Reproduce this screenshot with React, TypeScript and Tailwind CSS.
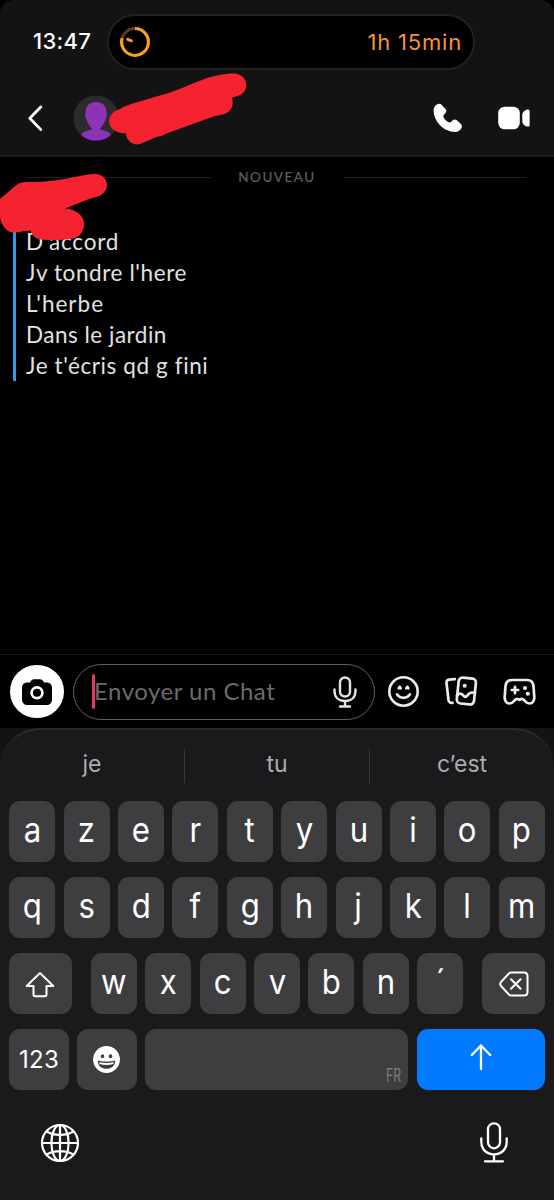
import React from 'react';

const topRow = ['a', 'z', 'e', 'r', 't', 'y', 'u', 'i', 'o', 'p'];
const middleRow = ['q', 's', 'd', 'f', 'g', 'h', 'j', 'k', 'l', 'm'];
const bottomRow = ['w', 'x', 'c', 'v', 'b', 'n', '´'];

const messages = [
  { text: "D'accord", spacing: 'tracking-[0.8px]' },
  { text: "Jv tondre l'here", spacing: 'tracking-[0.6px]' },
  { text: "L'herbe", spacing: 'tracking-[1px]' },
  { text: 'Dans le jardin', spacing: 'tracking-[0.5px]' },
  { text: "Je t'écris qd g fini", spacing: 'tracking-[0.6px]' },
];

const Key: React.FC<{ label: string }> = ({ label }) => (
  <button className="w-[46px] h-[61px] shrink-0 rounded-[11px] bg-[#3e3e40] pb-[2px] flex items-center justify-center text-[33.5px] leading-none text-white">
    <span className="scale-x-[0.93]">{label}</span>
  </button>
);

const StatusBar: React.FC = () => (
  <div className="flex pt-[14px] pl-[33px]">
    <span className="w-[74px] pt-[14px] text-[22px] leading-[27px] font-medium tracking-[0.3px] text-white">13:47</span>
    <div className="w-[368px] h-[55.5px] rounded-full border-2 border-[#212121] bg-black flex items-center justify-between pl-[10px] pr-[11px]">
      <svg width="32" height="32" viewBox="0 0 32 32" fill="none" strokeWidth="3">
        <circle cx="16" cy="16" r="13.4" stroke="#5c3d10" />
        <path d="M16 2.6A13.4 13.4 0 1 1 3.2 12" stroke="#f9a01f" />
        <path d="M8.7 13.4L12.4 14.8" stroke="#f9a01f" strokeLinecap="round" />
      </svg>
      <span className="text-[22px] leading-none tracking-[0.8px] text-[#f6923c]">1h 15min</span>
    </div>
  </div>
);

// 대화 상대 헤더
const ChatHeader: React.FC = () => (
  <div className="flex items-center h-[46px] mt-[25.5px] pl-[27px] pr-[23px]">
    <svg width="18" height="28" viewBox="0 0 18 28" fill="none" stroke="#fff" strokeWidth="2.8" strokeLinecap="round" strokeLinejoin="round">
      <path d="M13.8 3L2.8 14.2L13.8 25.6" />
    </svg>
    <svg className="ml-[28px]" width="46" height="46" viewBox="0 0 46 46">
      <clipPath id="avatar">
        <circle cx="23" cy="23" r="22.6" />
      </clipPath>
      <circle cx="23" cy="23" r="22.6" fill="#2c2c2d" />
      <g clipPath="url(#avatar)" fill="#8d33b7">
        <path d="M23 7C16.5 7 12.6 11 12.7 17.5C11.7 18 12 22.2 13.2 23.3C13.8 27.5 16 30.6 19 33.4L19 34.3C15 35.3 11.5 36 8 39.2V46H38V39.2C34.5 36 31 35.3 27 34.3V33.4C30 30.6 32.2 27.5 32.8 23.3C34 22.2 34.3 18 33.3 17.5C33.4 11 29.5 7 23 7Z" />
      </g>
    </svg>
    <div className="flex-1" />
    <svg width="30" height="30" viewBox="0 0 30 30" fill="#fff">
      <path d="M4.2 1.3C5.6.5 7.6.6 8.8 1.9L12.7 6.2C13.8 7.5 13.4 9 12.4 10L10.9 11.7C10.1 12.7 10.3 13.8 11 14.9C12 16.6 13.4 18 15.2 19C16.2 19.6 17.3 19.5 18.2 18.8L20 17.1C21.1 16.2 22.7 16.2 23.8 17.2L27.9 21.1C29.3 22.5 29.2 24.5 28.1 25.8C26.8 27.7 24.9 29 22.2 29C16.2 28.9 11 26.4 7 22.3C3 18 .6 12.6.6 7.4C.7 4.6 2 2.4 4.2 1.3Z" />
    </svg>
    <svg className="ml-[35px] mr-px" width="32" height="24" viewBox="0 0 32 24" fill="#fff">
      <rect x="0.2" y="0.7" width="21.6" height="22.6" rx="6.5" />
      <path d="M24.3 8.3C24.6 5.8 27.3 3.4 29.8 3.4C31 3.4 31.6 4 31.6 5V19C31.6 20 31 20.6 29.8 20.6C27.3 20.6 24.6 18.2 24.3 15.7Z" />
    </svg>
  </div>
);

const Composer: React.FC = () => (
  <div className="h-[74px] border-t border-[#151515] bg-black flex items-center pl-[10px] pr-[18.5px]">
    <div className="w-[53.5px] h-[53.5px] shrink-0 rounded-full bg-white flex items-center justify-center">
      <svg width="30" height="26" viewBox="0 0 30 26">
        <path d="M8 3.4C9.3 1.3 10.2.2 12 .2H18C19.8.2 20.7 1.3 22 3.4H24.5C28 3.4 30 5.5 30 9V20C30 24 28 26 24 26H6C2 26 0 24 0 20V9C0 5.5 2 3.4 5.5 3.4Z" fill="#000" />
        <circle cx="15" cy="13.8" r="5.4" fill="none" stroke="#fff" strokeWidth="2.7" />
      </svg>
    </div>
    <div className="ml-[9.5px] w-[302px] h-[56px] shrink-0 rounded-full border-[1.5px] border-[#606162] flex items-center pl-[18px] pr-[17px]">
      <div className="w-[3px] h-[35px] rounded-full bg-[#e33b55]" />
      <span className="-ml-px pb-[2px] text-[24px] leading-none tracking-[0.5px] text-[#6b6b6c] whitespace-nowrap font-[Lato,sans-serif]">Envoyer un Chat</span>
      <svg className="ml-auto" width="24" height="32" viewBox="0 0 24 32" fill="none" stroke="#e4e4e4" strokeWidth="2.4" strokeLinecap="round">
        <rect x="7" y="1.5" width="10" height="19" rx="5" />
        <path d="M1.5 13.5V15C1.5 21.5 6 25 12 25S22.5 21.5 22.5 15V13.5M12 25V30.5M7 30.5H17" />
      </svg>
    </div>
    <svg className="ml-[12px]" width="33" height="33" viewBox="0 0 33 33" fill="none" stroke="#ececec" strokeWidth="2.6" strokeLinecap="round" strokeLinejoin="round">
      <circle cx="16.5" cy="16.5" r="14.2" />
      <path d="M10 19.3C13 24 20 24 23 19.3" />
      <path d="M11.7 13.3L12.7 11.8L13.7 13.3M19.3 13.3L20.3 11.8L21.3 13.3" />
    </svg>
    <svg className="ml-[25px]" width="33" height="31" viewBox="0 0 33 31" fill="none" stroke="#ececec" strokeWidth="2.7" strokeLinecap="round" strokeLinejoin="round">
      <path d="M9.8 3.2L4 3.7C2.2 3.9 1.3 5 1.5 6.8L3.5 24C3.8 26 5 27.2 7.5 26.8" />
      <rect x="12.7" y="2" width="17.3" height="26" rx="4" transform="rotate(6 21 15)" />
      <path d="M12 19.5C14.5 17 16.5 17 18.5 19.7C20 21.6 21.5 21 22.8 19C24.5 16.5 26.5 15.8 30 17" />
      <circle cx="19.7" cy="9.7" r="1.3" fill="#ececec" strokeWidth="1.5" />
    </svg>
    <svg className="ml-auto" width="33" height="28" viewBox="0 0 33 28" fill="none" stroke="#ececec" strokeWidth="2.7" strokeLinecap="round" strokeLinejoin="round">
      <path d="M9 2H24C28 2 30 4 30.5 8L31.3 19C31.5 23 29.5 25.5 26.5 25.5C24.5 25.5 23 24.3 22 23C20.5 21 18.5 20.3 16.5 21.8C14.5 20.3 12.5 21 11 23C10 24.3 8.5 25.5 6.5 25.5C3.5 25.5 1.5 23 1.7 19L2.5 8C3 4 5 2 9 2Z" />
      <path d="M12 8.8V15.2M8.8 12H15.2" />
      <circle cx="22" cy="10" r="1.2" fill="#ececec" strokeWidth="1.7" />
      <circle cx="24.8" cy="15.8" r="1.2" fill="#ececec" strokeWidth="1.7" />
    </svg>
  </div>
);

const Keyboard: React.FC = () => (
  <div className="bg-[#131314]">
    <div className="h-[472px] rounded-t-[40px] border-t-2 border-[#2b2b2d] bg-[#1a1a1c] px-[9.3px]">
      {/* 추천 단어 */}
      <div className="-mx-[9.3px] h-[71px] flex items-center text-[23px] text-[#acacad]">
        <span className="w-[184px] pb-[3px] text-center">je</span>
        <div className="w-px h-[34px] bg-[#38383a]" />
        <span className="w-[184px] pb-[3px] text-center">tu</span>
        <div className="w-px h-[34px] bg-[#38383a]" />
        <span className="w-[184px] pb-[3px] text-center">c’est</span>
      </div>

      <div className="flex flex-col gap-[15px]">
        <div className="flex justify-between">
          {topRow.map((letter) => (
            <Key key={letter} label={letter} />
          ))}
        </div>
        <div className="flex justify-between">
          {middleRow.map((letter) => (
            <Key key={letter} label={letter} />
          ))}
        </div>
        <div className="flex justify-between">
          <button className="w-[62.3px] h-[61px] rounded-[11px] bg-[#3e3e40] pt-px flex items-center justify-center">
            <svg width="30" height="27" viewBox="0 0 30 27" fill="none" stroke="#fff" strokeWidth="2" strokeLinejoin="round">
              <path d="M15 2L28.3 15H21.5V23.5Q21.5 25.3 19.7 25.3H10.3Q8.5 25.3 8.5 23.5V15H1.7Z" />
            </svg>
          </button>
          <div className="w-[372.5px] flex justify-between">
            {bottomRow.map((letter) => (
              <Key key={letter} label={letter} />
            ))}
          </div>
          <button className="w-[62.3px] h-[61px] rounded-[11px] bg-[#3e3e40] pt-px flex items-center justify-center">
            <svg width="30" height="26" viewBox="0 0 30 26" fill="none" stroke="#fff" strokeWidth="2" strokeLinecap="round" strokeLinejoin="round">
              <path d="M12 1.5H25Q28.5 1.5 28.5 5V21Q28.5 24.5 25 24.5H12Q10.8 24.5 10 23.6L2 15Q.5 13 2 11L10 2.4Q10.8 1.5 12 1.5Z" />
              <path d="M12 8.2L21.6 17.8M21.6 8.2L12 17.8" />
            </svg>
          </button>
        </div>
        <div className="flex gap-[8.3px]">
          <button className="w-[59.6px] h-[61px] shrink-0 rounded-[11px] bg-[#3e3e40] text-[24px] tracking-[0.3px] text-white">123</button>
          <button className="w-[59.6px] h-[61px] shrink-0 rounded-[11px] bg-[#3e3e40] flex items-center justify-center">
            <svg width="27" height="27" viewBox="0 0 27 27">
              <circle cx="13.5" cy="13.5" r="13.4" fill="#fff" />
              <g fill="#3e3e40">
                <ellipse cx="9.5" cy="10.3" rx="1.7" ry="2" />
                <ellipse cx="17.5" cy="10.3" rx="1.7" ry="2" />
                <path d="M4.8 14.5C10 15.8 17 15.8 22.2 14.5C22.2 19.8 18.5 22.8 13.5 22.8S4.8 19.8 4.8 14.5Z" />
              </g>
              <path d="M6.2 16.2C11 17.3 16 17.3 20.8 16.2L20.3 18C16 19.2 11 19.2 6.7 18Z" fill="#fff" />
            </svg>
          </button>
          <div className="flex-1 h-[61px] rounded-[11px] bg-[#3e3e40] flex items-end justify-end pr-[7px] pb-[5px]">
            <span className="origin-right scale-x-[0.68] text-[18px] leading-[18px] text-[#7c7c7e]">FR</span>
          </div>
          <button className="w-[128px] h-[61px] shrink-0 rounded-[11px] bg-[#017aff] flex items-center justify-center pb-[4px]">
            <svg width="22" height="27" viewBox="0 0 22 27" fill="none" stroke="#fff" strokeWidth="2.3" strokeLinecap="round" strokeLinejoin="round">
              <path d="M11 1.5V25M1.8 11L11 1.5L20.2 11" />
            </svg>
          </button>
        </div>
      </div>

      <div className="flex justify-between items-start pt-[32px] pl-[31px] pr-[37px]">
        <svg className="mt-px" width="40" height="40" viewBox="0 0 40 40" fill="none" stroke="#fff" strokeWidth="2.2">
          <circle cx="20" cy="20" r="18" />
          <ellipse cx="20" cy="20" rx="8.6" ry="18" />
          <path d="M20 2V38M2 20H38M6.7 8.5C14 13 26 13 33.3 8.5M6.7 31.5C14 27 26 27 33.3 31.5" />
        </svg>
        <svg width="28" height="41" viewBox="0 0 28 41" fill="none" stroke="#fff" strokeWidth="2.3" strokeLinecap="round">
          <rect x="8" y="1.3" width="12" height="25" rx="6" />
          <path d="M1.3 16.5V19.5C1.3 27.5 6.5 32.3 14 32.3S26.7 27.5 26.7 19.5V16.5M14 32.3V39M5 39.3H23" />
        </svg>
      </div>
    </div>
  </div>
);

const App: React.FC = () => {
  return (
    <div className="relative w-[554px] h-[1200px] overflow-hidden bg-black flex flex-col font-[Inter,sans-serif]">
      <div className="h-[157px] shrink-0 rounded-t-[14px] border-b-2 border-[#1d1d1d] bg-[#131313]">
        <StatusBar />
        <ChatHeader />
      </div>

      <div className="flex-1 font-[Lato,sans-serif]">
        <div className="flex items-center justify-between h-[41px] px-[28px]">
          <div className="w-[183px] h-px bg-[#1f1f1f]" />
          <span className="text-[13.5px] tracking-[1.5px] font-medium text-[#606060]">NOUVEAU</span>
          <div className="w-[183px] h-px bg-[#1f1f1f]" />
        </div>
        <div className="ml-[13px] mt-[28px] border-l-[3px] border-[#2a9fe8] pl-[10px]">
          {messages.map((message) => (
            <p key={message.text} className={`h-[31px] text-[22.5px] leading-[31px] text-[#e2e2e2] ${message.spacing}`}>
              {message.text}
            </p>
          ))}
        </div>
      </div>

      <Composer />
      <Keyboard />

      {/* 이름을 가리는 빨간 낙서 */}
      <svg className="absolute left-0 top-0" width="260" height="250" viewBox="0 0 260 250" fill="#f5232f">
        <path d="M109 122C109 116 113 111 120 109C123 107 127 105.5 131 104L165 94C177 91 190 84 202 80C212 76 224 73.5 234 73.5C241 73.5 246 78.5 246.3 85C246.3 91 242 96 232 97.5C233.5 103 233 107 229 111C225 115.5 218 114.5 212 117L165 134C162 137 158 136 155 137.5L140 144C133 146 126.5 141 125.7 133C118 134 109.5 129 109 122Z" />
        <path d="M0 199L14 187C18 183 22 182 28 182C47 182 60 180 72 177.5C81 176 89 173.8 96 174C102 174.2 107 179 107 185C107 191 103 194 99 196C94 198 89 198.5 84 201L65 208.5C76 209.5 84 215 84 224C84 233 78 238.5 70 239C60 240.5 51 240 43 239.7C36 239.3 32 236 30.5 230.5C23 231 18 232.5 12 232.5C5 231 1 224 0 217Z" />
      </svg>
    </div>
  );
};

export default App;
